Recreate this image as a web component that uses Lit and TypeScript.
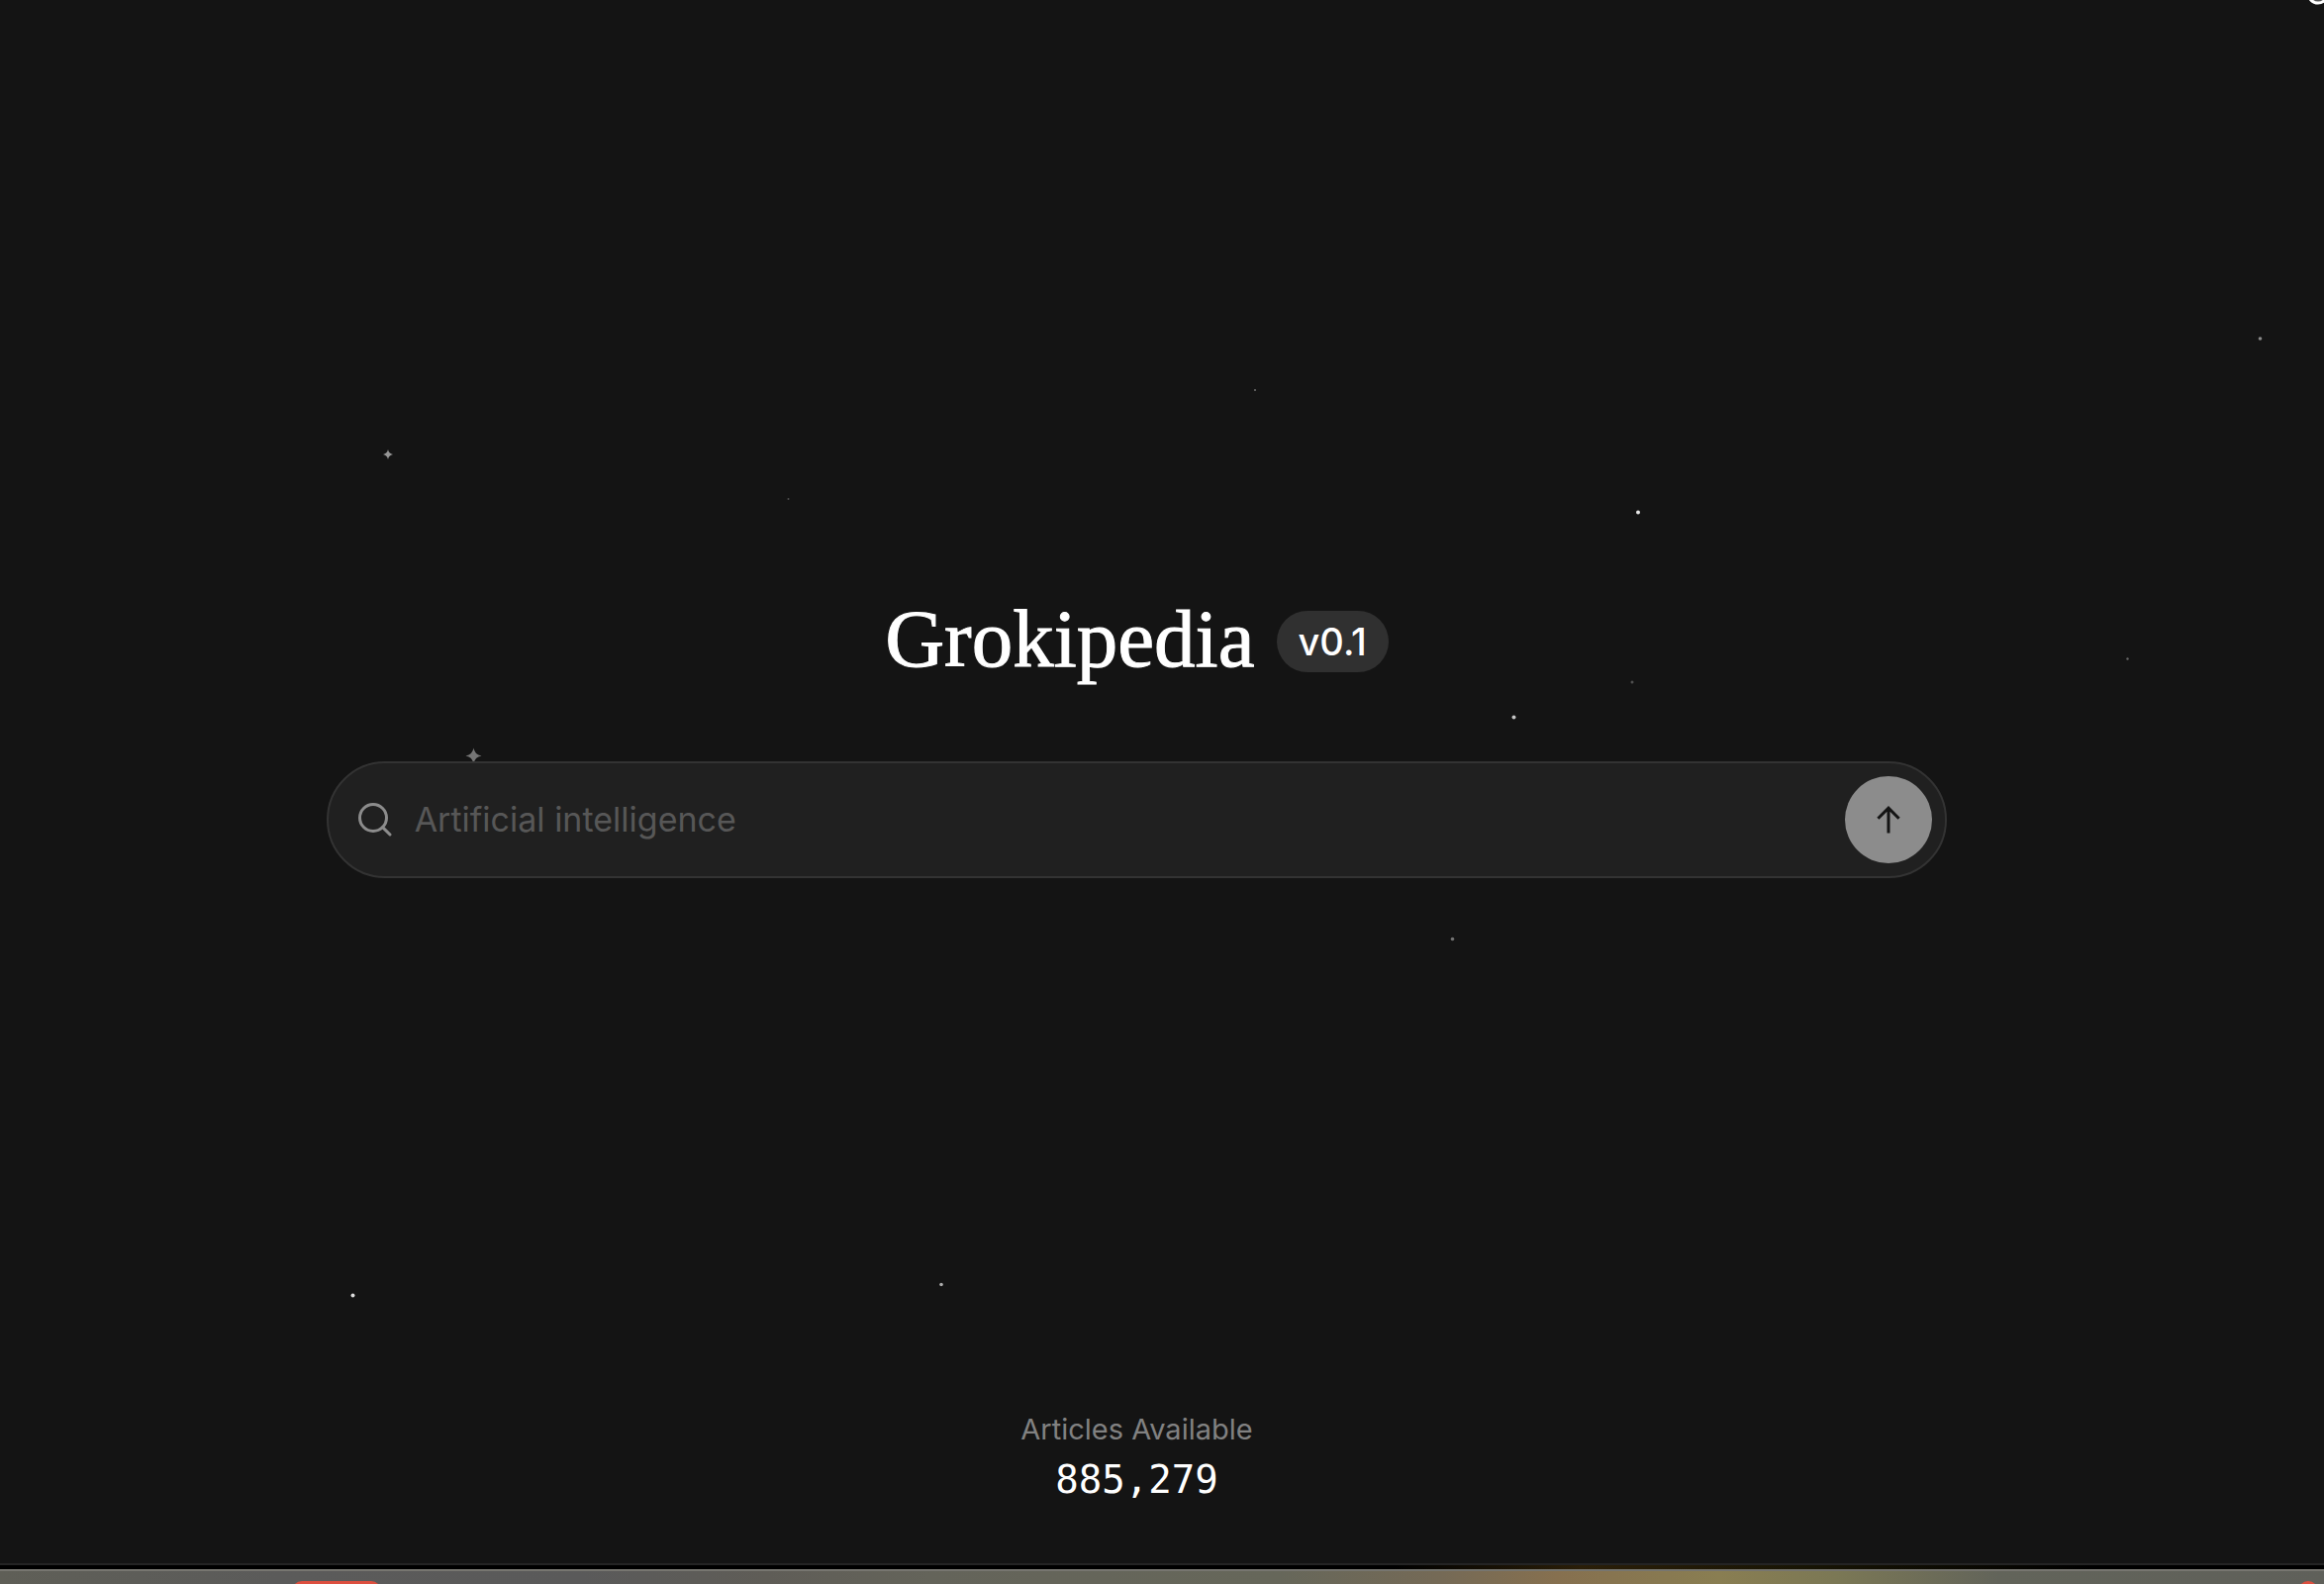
import { LitElement, html, css, svg } from "lit";
import { customElement, state } from "lit/decorators.js";

type Star = { x: number; y: number; r: number; o: number; spark?: boolean };

const STARS: Star[] = [
  { x: 392, y: 459, r: 5, o: 0.55, spark: true },
  { x: 478.5, y: 763.5, r: 8, o: 0.42, spark: true },
  { x: 2283.5, y: 342, r: 1.8, o: 0.5 },
  { x: 1268, y: 394, r: 1, o: 0.4 },
  { x: 796.5, y: 504, r: 1, o: 0.25 },
  { x: 1655, y: 517.5, r: 2, o: 0.9 },
  { x: 2149.5, y: 665.5, r: 1.2, o: 0.35 },
  { x: 1649, y: 689, r: 1.5, o: 0.25 },
  { x: 1529.5, y: 724.5, r: 2, o: 0.75 },
  { x: 1467.5, y: 948.5, r: 1.8, o: 0.4 },
  { x: 951, y: 1297.5, r: 1.8, o: 0.65 },
  { x: 356.5, y: 1308.5, r: 2, o: 0.85 },
];

@customElement("star-field")
class StarField extends LitElement {
  static styles = css`
    :host { display: block; }
    .sky { display: block; width: 100%; height: 100%; }
  `;

  render() {
    return html`<svg class="sky" viewBox="0 0 2348 1600" preserveAspectRatio="xMidYMid slice" aria-hidden="true">
      ${STARS.map((s) =>
        s.spark
          ? svg`<path transform="translate(${s.x} ${s.y}) scale(${s.r})" fill="#fff" fill-opacity=${s.o}
              d="M0-1C.14-.4.4-.14 1 0C.4.14.14.4 0 1C-.14.4-.4.14-1 0C-.4-.14-.14-.4 0-1Z" />`
          : svg`<circle cx=${s.x} cy=${s.y} r=${s.r} fill="#fff" fill-opacity=${s.o} />`
      )}
      <circle cx="2342" cy="-7" r="10" fill="#555" stroke="#fff" stroke-width="3" />
    </svg>`;
  }
}

@customElement("dock-edge")
class DockEdge extends LitElement {
  static styles = css`
    :host {
      display: block;
      box-sizing: border-box;
      height: 21px;
      border-top: 2px solid #242424;
      background: #000;
    }
    .black { height: 4px; background: linear-gradient(90deg, #000 60%, #2a1e08 68%, #171404 78%, #000 90%); }
    .shelf {
      display: flex;
      box-sizing: border-box;
      height: 15px;
      border-top: 2px solid #777670;
      padding-top: 10px;
      overflow: hidden;
      background: linear-gradient(90deg, #5f5f57 0%, #5b5b5a 12%, #5a5a5a 25%, #5f5d57 33%, #64645a 40%, #66675a 55%, #756a56 62%, #86704f 67%, #897e52 74%, #7b7855 79%, #62645a 86%, #5f605a 100%);
    }
    .tile { flex: none; height: 20px; background: #dc4f3f; }
    .wide { width: 90px; margin-left: 295px; border-radius: 10px; }
    .dot { width: 20px; margin-left: auto; margin-right: 6px; border-radius: 10px; }
  `;

  render() {
    return html`
      <div class="black"></div>
      <div class="shelf"><span class="tile wide"></span><span class="tile dot"></span></div>
    `;
  }
}

@customElement("app-root")
export class AppRoot extends LitElement {
  @state() private query = "";

  static styles = css`
    :host {
      display: flex;
      flex-direction: column;
      position: relative;
      min-height: 100vh;
      overflow: hidden;
      background: #141414;
      color: #fff;
      font-family: Inter, "Liberation Sans", sans-serif;
    }
    .stars { position: absolute; inset: 0; }
    .page {
      position: relative;
      flex: 1;
      display: flex;
      flex-direction: column;
      align-items: center;
      padding: 598px 51px 56px 0;
    }
    .brand { display: flex; align-items: center; gap: 22px; }
    .title {
      margin: 0 0 6px;
      font: 400 83px/94px "Liberation Serif", serif;
      -webkit-text-stroke: 1px currentColor;
    }
    .badge {
      padding: 0 22px;
      border-radius: 31px;
      background: #303030;
      font-size: 38px;
      font-weight: 500;
      line-height: 62px;
    }
    .search {
      display: flex;
      align-items: center;
      gap: 23px;
      box-sizing: border-box;
      width: 71.3%;
      height: 118px;
      margin-top: 71px;
      padding: 0 13px 0 30px;
      border: 2px solid #333;
      border-radius: 59px;
      background: #202020;
    }
    .lens { flex: none; width: 34px; height: 34px; }
    .field {
      flex: 1;
      min-width: 0;
      padding: 0;
      border: 0;
      outline: 0;
      background: none;
      color: #fff;
      font: 400 34px/48px Inter, "Liberation Sans", sans-serif;
    }
    .field::placeholder { color: #575757; opacity: 1; }
    .send {
      flex: none;
      display: grid;
      place-items: center;
      width: 88px;
      height: 88px;
      padding: 0;
      border: 0;
      border-radius: 50%;
      background: #8c8c8c;
      color: #141414;
    }
    .arrow { width: 24px; height: 28px; }
    .stats { margin-top: auto; text-align: center; }
    .label { margin: 0; color: #818181; font-size: 29px; line-height: 46px; }
    .count { margin: 0; font: 400 39px/56px "DejaVu Sans Mono", monospace; }
  `;

  private onInput(e: Event) {
    this.query = (e.target as HTMLInputElement).value;
  }

  render() {
    return html`
      <star-field class="stars"></star-field>
      <main class="page">
        <div class="brand">
          <h1 class="title">Grokipedia</h1>
          <span class="badge">v0.1</span>
        </div>
        <form class="search" role="search" @submit=${(e: Event) => e.preventDefault()}>
          <svg class="lens" viewBox="0 0 34 34" fill="none" stroke="#8c8c8c" stroke-width="3" stroke-linecap="round" aria-hidden="true">
            <circle cx="15" cy="15" r="13.5" />
            <path d="M24.6 24.6L32 32" />
          </svg>
          <input class="field" type="text" aria-label="Search" placeholder="Artificial intelligence" .value=${this.query} @input=${this.onInput} />
          <button class="send" type="submit" aria-label="Search">
            <svg class="arrow" viewBox="0 0 24 28" fill="none" stroke="currentColor" stroke-width="3" aria-hidden="true">
              <path d="M12 27.5V2.2M1.4 12.8L12 2.2L22.6 12.8" />
            </svg>
          </button>
        </form>
        <div class="stats">
          <p class="label">Articles Available</p>
          <p class="count">885,279</p>
        </div>
      </main>
      <dock-edge></dock-edge>
    `;
  }
}
